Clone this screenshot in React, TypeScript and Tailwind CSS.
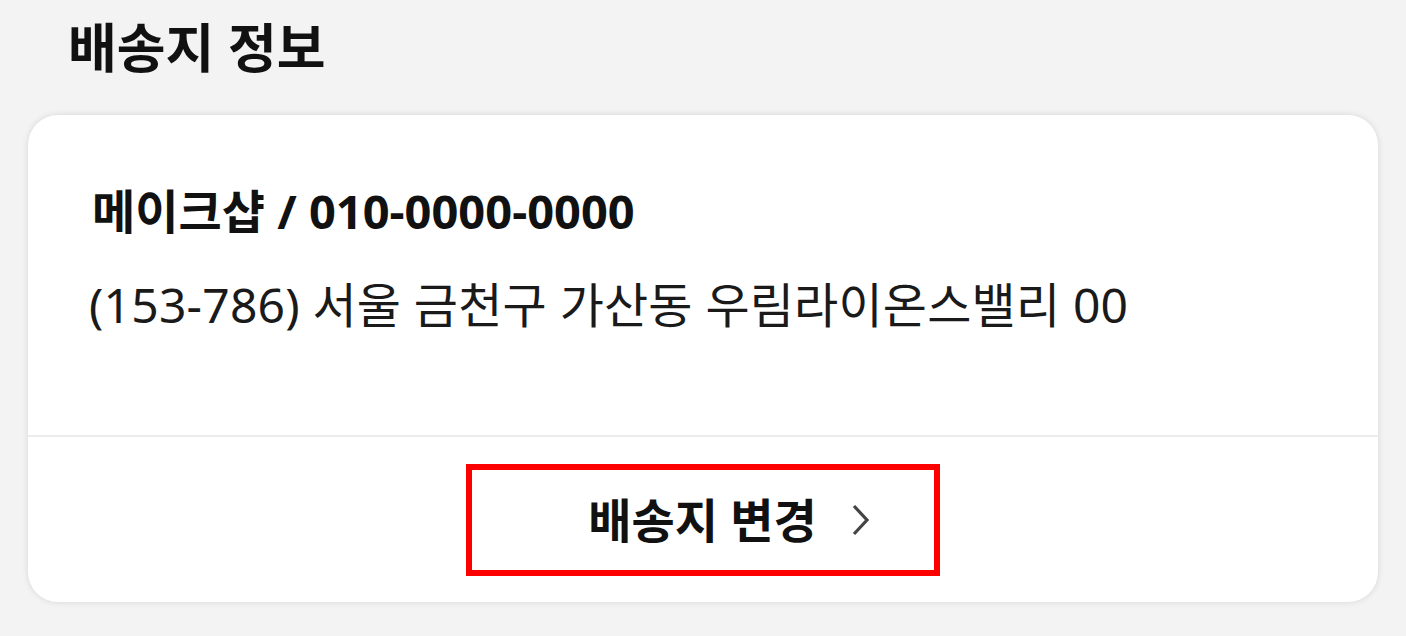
import React from "react";

export default function App() {
  const ko = { fontFamily: '"Noto Sans", "Noto Sans CJK KR", sans-serif' };
  return (
    <div className="w-[1406px] h-[636px] bg-[#f3f3f3] px-[28px] flex flex-col" style={ko}>
      <h1 className="h-[115px] pl-[40px] pt-[12px] text-[53px] font-bold text-[#111] leading-[72px]">
        배송지 정보
      </h1>
      <div className="h-[487px] bg-white rounded-[30px] shadow-[0_0_6px_rgba(0,0,0,0.12)] flex flex-col">
        <div className="h-[322px] pl-[64px] pt-[64px] border-b-2 border-[#ececec]">
          <div className="text-[47px] font-bold text-[#111] leading-[64px]">
            메이크샵 / 010-0000-0000
          </div>
          <div className="mt-[30px] -ml-[3px] text-[48px] tracking-[0.2px] text-[#1a1a1a] leading-[64px]">
            (153-786) 서울 금천구 가산동 우림라이온스밸리 00
          </div>
        </div>
        <div className="flex-1 flex items-center justify-center">
          <button className="w-[474px] h-[112px] border-[6px] border-[#ff0000] flex items-center justify-center gap-[35px] pl-[52px]">
            <span className="text-[47px] font-bold text-[#111] leading-[60px]">배송지 변경</span>
            <svg width="18" height="32" viewBox="0 0 18 32" fill="none">
              <path d="M2 2 L15 16 L2 30" stroke="#444" strokeWidth="3.2" />
            </svg>
          </button>
        </div>
      </div>
    </div>
  );
}
